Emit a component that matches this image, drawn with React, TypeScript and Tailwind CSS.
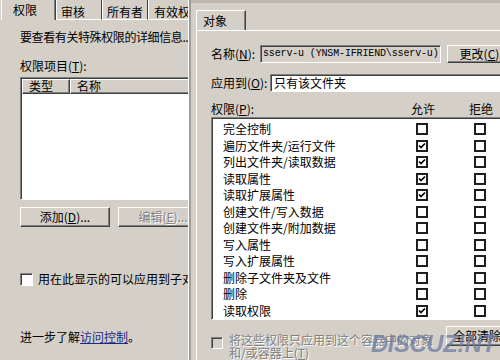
import React from "react";

type Perm = { name: string; allow: boolean };

const perms: Perm[] = [
  { name: "完全控制", allow: false },
  { name: "遍历文件夹/运行文件", allow: true },
  { name: "列出文件夹/读取数据", allow: true },
  { name: "读取属性", allow: true },
  { name: "读取扩展属性", allow: true },
  { name: "创建文件/写入数据", allow: false },
  { name: "创建文件夹/附加数据", allow: false },
  { name: "写入属性", allow: false },
  { name: "写入扩展属性", allow: false },
  { name: "删除子文件夹及文件", allow: false },
  { name: "删除", allow: false },
  { name: "读取权限", allow: true },
];

const raised =
  "border border-t-white border-l-white border-r-[#404040] border-b-[#404040] shadow-[inset_-1px_-1px_0_#808080]";
const sunken =
  "border border-t-[#808080] border-l-[#808080] border-r-white border-b-white shadow-[inset_1px_1px_0_#404040]";
const disabledText = "text-[#808080] [text-shadow:1px_1px_0_#ffffff]";

function Key({ children }: { children: React.ReactNode }) {
  return <span className="underline underline-offset-1">{children}</span>;
}

function ListCheck({ checked }: { checked: boolean }) {
  return (
    <span className="w-[12px] h-[12px] border-2 border-[#1e1e1e] bg-white flex items-center justify-center">
      {checked && (
        <svg width="8" height="8" viewBox="0 0 8 8">
          <path d="M1 3.5L3 5.5L7 1.5" stroke="#000" strokeWidth="1.7" fill="none" />
        </svg>
      )}
    </span>
  );
}

function Check3D({ disabled }: { disabled?: boolean }) {
  return (
    <span
      className={`w-[13px] h-[13px] shrink-0 ${sunken} ${disabled ? "bg-[#d4d0c8]" : "bg-white"}`}
    />
  );
}

function LeftPage() {
  return (
    <div className="w-[189px] h-full shrink-0 overflow-hidden border-r border-white">
      <div className="w-[240px]">
        {/* tabs */}
        <div className="h-[20px] flex">
          <div className="w-[55px] ml-[1px] border-l border-r border-white border-r-[#404040] shadow-[inset_-1px_0_0_#808080] pl-[11px] pt-[3px]">
            权限
          </div>
          <div className="w-[46px] border-l border-r border-b border-white border-r-[#404040] pl-[4px] pt-[5px]">
            审核
          </div>
          <div className="w-[46px] border-l border-r border-b border-white border-r-[#404040] pl-[4px] pt-[5px]">
            所有者
          </div>
          <div className="w-[60px] border-l border-r border-b border-white border-r-[#404040] pl-[5px] pt-[5px]">
            有效权限
          </div>
          <div className="flex-1 border-b border-white" />
        </div>

        <div className="pl-[20px]">
          <div className="mt-[10px] whitespace-nowrap tracking-[-0.4px]">
            要查看有关特殊权限的详细信息...
          </div>
          <div className="mt-[15px]">
            权限项目(<Key>T</Key>):
          </div>
          <div className={`mt-[4px] h-[123px] w-[220px] bg-white ${sunken}`}>
            <div className="h-[15px] flex bg-[#d4d0c8] ml-[1px] mt-[1px]">
              <div className={`w-[48px] pl-[6px] leading-[12px] ${raised}`}>类型</div>
              <div className={`flex-1 pl-[6px] leading-[12px] ${raised}`}>名称</div>
            </div>
          </div>
          <div className="mt-[7px] flex gap-[8px]">
            <div className={`w-[90px] h-[20px] flex items-center justify-center ${raised}`}>
              添加(<Key>D</Key>)...
            </div>
            <div
              className={`w-[90px] h-[20px] flex items-center justify-center ${raised} ${disabledText}`}
            >
              编辑(<Key>E</Key>)...
            </div>
          </div>
          <div className="mt-[45px] flex items-center gap-[5px] whitespace-nowrap">
            <Check3D />
            <span>用在此显示的可以应用到子对象</span>
          </div>
          <div className="mt-[44px] whitespace-nowrap">
            进一步了解<span className="text-[#1b2a8c] underline underline-offset-1">访问控制</span>。
          </div>
        </div>
      </div>
    </div>
  );
}

function RightDialog() {
  return (
    <div className="flex-1 min-w-0 h-full flex flex-col overflow-hidden border-l-2 border-[#a19e97]">
      <div className="h-[3px] bg-[#bdb9b1]" />
      <div className="pl-[5px] mt-[7px] flex">
        <div className="h-[20px] w-[50px] border-l border-t border-r border-white border-r-[#404040] shadow-[inset_-1px_0_0_#808080] pl-[6px] pt-[3px]">
          对象
        </div>
      </div>
      <div className="ml-[5px] flex-1 border-l border-t border-white pl-[14px] w-[320px]">
        {/* name */}
        <div className="mt-[14px] h-[18px] flex items-center">
          <span className="w-[49px] shrink-0">
            名称(<Key>N</Key>):
          </span>
          <div
            className={`w-[181px] h-[18px] shrink-0 flex items-center pl-[2px] bg-[#d4d0c8] ${sunken} font-['Liberation_Mono',monospace] text-[10px] tracking-[-0.15px] whitespace-nowrap overflow-hidden`}
          >
            sserv-u (YNSM-IFRIEND\sserv-u)
          </div>
          <div
            className={`ml-[6px] w-[75px] h-[18px] shrink-0 flex items-center justify-center whitespace-nowrap ${raised}`}
          >
            更改(<Key>C</Key>)...
          </div>
        </div>

        {/* apply to */}
        <div className="mt-[11px] h-[18px] flex items-center">
          <span className="w-[59px] shrink-0 whitespace-nowrap">
            应用到(<Key>O</Key>):
          </span>
          <div className={`w-[240px] h-[18px] shrink-0 flex items-center pl-[3px] bg-white ${sunken}`}>
            只有该文件夹
          </div>
        </div>

        {/* header */}
        <div className="mt-[10px] flex">
          <span className="w-[200px] shrink-0">
            权限(<Key>P</Key>):
          </span>
          <span className="w-[58px] shrink-0">允许</span>
          <span>拒绝</span>
        </div>

        {/* permission list */}
        <div className={`mt-[1px] h-[203px] w-[300px] bg-white pt-[3px] pl-[11px] ${sunken}`}>
          {perms.map((p) => (
            <div key={p.name} className="h-[16.5px] flex items-center">
              <span className="w-[193px] shrink-0 whitespace-nowrap">{p.name}</span>
              <span className="w-[58px] shrink-0">
                <ListCheck checked={p.allow} />
              </span>
              <ListCheck checked={false} />
            </div>
          ))}
        </div>

        {/* bottom */}
        <div className="mt-[4px] flex items-start">
          <div className="mt-[13px]">
            <span className={`block w-[12px] h-[12px] ${sunken} bg-[#d4d0c8]`} />
          </div>
          <div className={`ml-[6px] mt-[9px] w-[212px] leading-[13px] whitespace-nowrap ${disabledText}`}>
            将这些权限只应用到这个容器中的对象
            <br />
            和/或容器上(<Key>T</Key>)
          </div>
          <div
            className={`ml-[6px] mt-[2px] w-[70px] h-[20px] shrink-0 flex items-center pl-[6px] whitespace-nowrap ${raised}`}
          >
            全部清除
          </div>
        </div>
      </div>
    </div>
  );
}

export default function App() {
  return (
    <div className="w-[500px] h-[360px] overflow-hidden relative flex bg-[#d4d0c8] text-black text-[12px] leading-[14px] font-['Noto_Sans_CJK_SC','Noto_Sans',sans-serif]">
      <LeftPage />
      <RightDialog />
      <div className="absolute left-[371px] top-[332px] font-['Liberation_Sans',sans-serif] text-[24px] leading-[24px] font-bold italic tracking-[-0.5px] text-[#6f7aa2] opacity-75 pointer-events-none">
        DISCUZ!NT
      </div>
    </div>
  );
}
